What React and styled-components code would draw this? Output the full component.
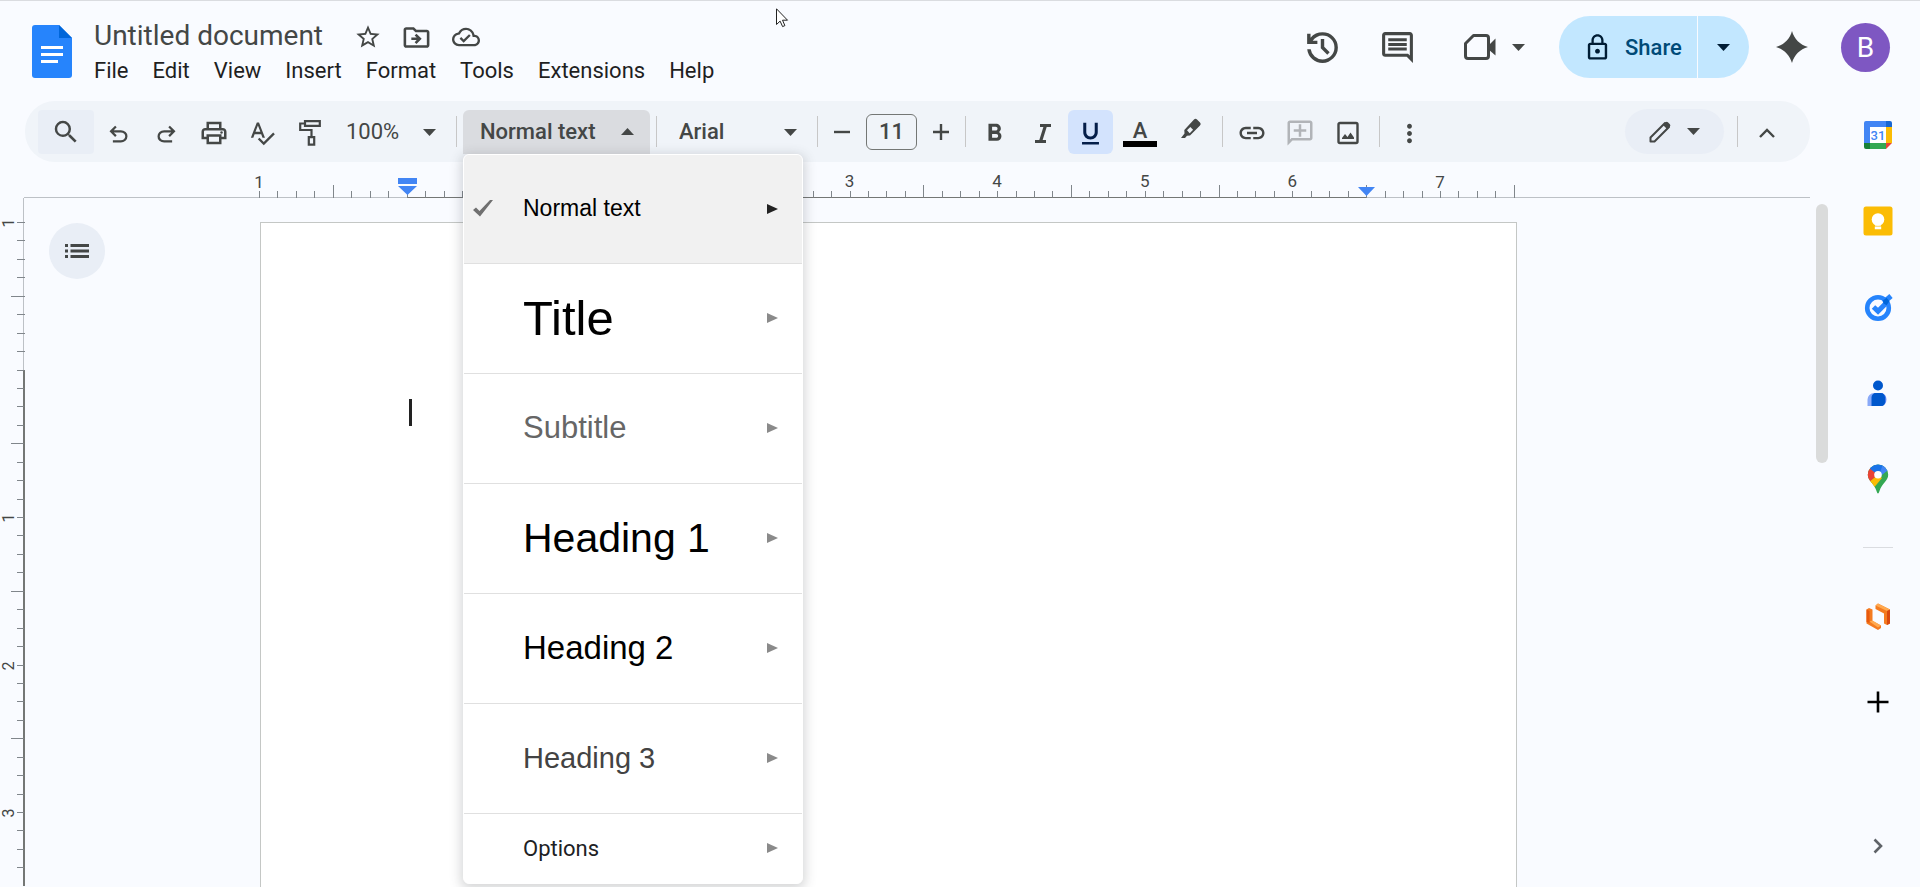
import { useState } from "react";
import styled, { createGlobalStyle } from "styled-components";
import {
  MdFormatBold,
  MdFormatUnderlined,
  MdLink,
  MdLockOutline,
  MdMoreVert,
  MdOutlineAddComment,
  MdOutlineCloudDone,
  MdOutlineDriveFileMove,
  MdOutlineInsertComment,
  MdOutlinePrint,
  MdSearch,
  MdSpellcheck,
  MdStarBorder,
} from "react-icons/md";

const MENUS = [
  "File",
  "Edit",
  "View",
  "Insert",
  "Format",
  "Tools",
  "Extensions",
  "Help",
];

const STYLES = [
  { name: "Normal text", size: 23, color: "#000", active: true },
  { name: "Title", size: 49, color: "#000" },
  { name: "Subtitle", size: 31, color: "#666" },
  { name: "Heading 1", size: 41, color: "#000" },
  { name: "Heading 2", size: 33, color: "#000" },
  { name: "Heading 3", size: 29, color: "#434343" },
];

// rulers are split in eighths of an inch, with a one inch page margin
const EIGHTHS_WIDE = 68;
const EIGHTHS_TALL = 36;

const inchLabel = (i) => {
  const inch = i / 8 - 1;
  return Number.isInteger(inch) && inch !== 0 ? Math.abs(inch) : null;
};

const App = () => {
  const [title, setTitle] = useState("Untitled document");
  const [fontSize, setFontSize] = useState("11");

  return (
    <>
      <GlobalStyle />
      <Page>
        <Header>
          <LogoLink href="#" aria-label="Docs home">
            <DocsLogo />
          </LogoLink>
          <TitleColumn>
            <TitleRow>
              <TitleInput
                aria-label="Document title"
                value={title}
                onChange={(e) => setTitle(e.target.value)}
              />
              <TitleIcons>
                <IconButton $width={49} aria-label="Star">
                  <MdStarBorder size={28} />
                </IconButton>
                <IconButton $width={49} aria-label="Move">
                  <MdOutlineDriveFileMove size={31} />
                </IconButton>
                <IconButton $width={49} aria-label="Document status">
                  <MdOutlineCloudDone size={28} />
                </IconButton>
              </TitleIcons>
            </TitleRow>
            <MenuBar>
              {MENUS.map((menu) => (
                <MenuButton key={menu}>{menu}</MenuButton>
              ))}
            </MenuBar>
          </TitleColumn>
          <HeaderActions>
            <IconButton $width={75} aria-label="Version history">
              <HistoryIcon />
            </IconButton>
            <IconButton $width={75} aria-label="Comments">
              <MdOutlineInsertComment size={37} />
            </IconButton>
            <MeetButton aria-label="Join a call">
              <MeetIcon />
              <Caret />
            </MeetButton>
            <ShareGroup>
              <ShareButton>
                <MdLockOutline size={29} color="#001d35" />
                Share
              </ShareButton>
              <ShareMore aria-label="Share options">
                <Caret />
              </ShareMore>
            </ShareGroup>
            <IconButton $width={86} aria-label="Ask Gemini">
              <SparkIcon />
            </IconButton>
            <Avatar aria-label="Account">B</Avatar>
          </HeaderActions>
        </Header>

        <Body>
          <Main>
            <Toolbar>
              <SearchButton aria-label="Search the menus">
                <MdSearch size={30} />
              </SearchButton>
              <ToolButton $width={48} aria-label="Undo">
                <UndoIcon />
              </ToolButton>
              <ToolButton $width={48} aria-label="Redo">
                <RedoIcon />
              </ToolButton>
              <ToolButton $width={48} aria-label="Print">
                <MdOutlinePrint size={30} />
              </ToolButton>
              <ToolButton $width={48} aria-label="Spelling">
                <MdSpellcheck size={28} />
              </ToolButton>
              <ToolButton $width={48} aria-label="Paint format">
                <RollerIcon />
              </ToolButton>
              <SelectBox $width={116}>
                <ToolSelect aria-label="Zoom" $pad={12} defaultValue="100%">
                  <option>100%</option>
                </ToolSelect>
                <SelectCaret>
                  <Caret />
                </SelectCaret>
              </SelectBox>
              <Separator />
              <StylePicker>
                <StyleButton aria-haspopup="menu" aria-expanded="true">
                  Normal text
                  <Caret up />
                </StyleButton>
                <StyleMenu role="menu">
                  {STYLES.map((item) => (
                    <StyleItem
                      key={item.name}
                      role="menuitem"
                      $active={item.active}
                    >
                      <CheckSlot>{item.active && <CheckIcon />}</CheckSlot>
                      <StyleName $size={item.size} $color={item.color}>
                        {item.name}
                      </StyleName>
                      <ArrowIcon />
                    </StyleItem>
                  ))}
                  <OptionsItem role="menuitem">
                    <CheckSlot />
                    <OptionsName>Options</OptionsName>
                    <ArrowIcon />
                  </OptionsItem>
                </StyleMenu>
              </StylePicker>
              <Separator />
              <SelectBox $width={148}>
                <ToolSelect
                  aria-label="Font"
                  $pad={16}
                  $medium
                  defaultValue="Arial"
                >
                  <option>Arial</option>
                </ToolSelect>
                <SelectCaret>
                  <Caret />
                </SelectCaret>
              </SelectBox>
              <Separator />
              <SizeButton aria-label="Decrease font size">
                <MinusIcon />
              </SizeButton>
              <SizeInput
                aria-label="Font size"
                value={fontSize}
                onChange={(e) => setFontSize(e.target.value)}
              />
              <SizeButton aria-label="Increase font size">
                <PlusIcon />
              </SizeButton>
              <Separator />
              <ToolGroup>
                <ToolButton aria-label="Bold">
                  <MdFormatBold size={29} />
                </ToolButton>
                <ToolButton aria-label="Italic">
                  <ItalicIcon />
                </ToolButton>
                <ToolButton $pressed aria-label="Underline" aria-pressed="true">
                  <MdFormatUnderlined size={29} />
                </ToolButton>
                <ColorButton aria-label="Text color">
                  A
                  <ColorBar />
                </ColorButton>
                <ToolButton $width={48} aria-label="Highlight color">
                  <HighlighterIcon />
                </ToolButton>
              </ToolGroup>
              <Separator $before={7} />
              <ToolGroup>
                <ToolButton aria-label="Insert link">
                  <MdLink size={30} />
                </ToolButton>
                <AddCommentButton aria-label="Add comment" disabled>
                  <MdOutlineAddComment size={30} />
                </AddCommentButton>
                <ToolButton aria-label="Insert image">
                  <PictureIcon />
                </ToolButton>
              </ToolGroup>
              <Separator $before={9} $after={7} />
              <ToolButton aria-label="More">
                <MdMoreVert size={29} />
              </ToolButton>
              <Spacer />
              <ModeButton aria-label="Editing mode">
                <PencilIcon />
                <Caret />
              </ModeButton>
              <Separator $before={13} />
              <ToolButton aria-label="Hide the menus">
                <ChevronUpIcon />
              </ToolButton>
            </Toolbar>

            <Ruler>
              <RulerTrack>
                {Array.from({ length: EIGHTHS_WIDE }, (_, i) => (
                  <Tick
                    key={i}
                    $half={i % 8 === 4}
                    $inside={i >= 8 && i < EIGHTHS_WIDE - 8}
                  >
                    {inchLabel(i) && <TickLabel>{inchLabel(i)}</TickLabel>}
                    {i === 8 && (
                      <Marker>
                        <svg width="19" height="18" viewBox="0 0 19 18">
                          <path d="M0 0h19v6H0zM0 8h19l-9.500 9z" />
                        </svg>
                      </Marker>
                    )}
                    {i === EIGHTHS_WIDE - 8 && (
                      <Marker>
                        <svg width="19" height="18" viewBox="0 0 19 18">
                          <path d="M1 8h17l-8.500 9z" />
                        </svg>
                      </Marker>
                    )}
                  </Tick>
                ))}
                <LastTick />
              </RulerTrack>
            </Ruler>

            <Workspace>
              <SideRuler>
                <SideLead />
                <SideTrack>
                  {Array.from({ length: EIGHTHS_TALL }, (_, i) => (
                    <SideTick key={i} $half={i % 8 === 4} $inside={i >= 8}>
                      {inchLabel(i) && (
                        <SideLabel $inside={i >= 8}>{inchLabel(i)}</SideLabel>
                      )}
                    </SideTick>
                  ))}
                </SideTrack>
              </SideRuler>
              <OutlineButton aria-label="Show outline">
                <ListIcon />
              </OutlineButton>
              <Canvas>
                <Sheet>
                  <TextCursor />
                </Sheet>
              </Canvas>
              <ScrollTrack>
                <ScrollThumb />
              </ScrollTrack>
            </Workspace>
          </Main>

          <SidePanel>
            <SideGroup>
              <SideButton aria-label="Calendar">
                <CalendarIcon />
              </SideButton>
              <SideButton aria-label="Keep">
                <KeepIcon />
              </SideButton>
              <SideButton aria-label="Tasks">
                <TasksIcon />
              </SideButton>
              <SideButton aria-label="Contacts">
                <ContactsIcon />
              </SideButton>
              <SideButton aria-label="Maps">
                <MapsIcon />
              </SideButton>
            </SideGroup>
            <SideDivider />
            <SideGroup>
              <SideButton aria-label="Add-on">
                <AddOnIcon />
              </SideButton>
              <SideButton aria-label="Get add-ons">
                <svg width="30" height="30" viewBox="0 0 30 30">
                  <path d="M15 4.500v21M4.500 15h21" stroke="#000" strokeWidth="2.600" />
                </svg>
              </SideButton>
            </SideGroup>
            <HidePanel aria-label="Hide side panel">
              <svg width="30" height="30" viewBox="0 0 30 30" fill="none">
                <path d="M11.500 8.500 18 15l-6.500 6.500" stroke="#5f6368" strokeWidth="2.600" />
              </svg>
            </HidePanel>
          </SidePanel>
        </Body>

        <Pointer>
          <svg width="13" height="20" viewBox="0 0 13 20">
            <path
              d="M.5.8v15.700l3.600-3.400 2.500 5.500 2.300-1-2.400-5.400h5z"
              fill="#fff"
              stroke="#222"
            />
          </svg>
        </Pointer>
      </Page>
    </>
  );
};

export default App;

const Caret = ({ up }) => (
  <svg width="13" height="7" viewBox="0 0 13 7" fill="currentColor">
    <path d={up ? "M0 7 6.500 0 13 7z" : "M0 0h13L6.500 7z"} />
  </svg>
);

const DocsLogo = () => (
  <svg width="40" height="53" viewBox="0 0 40 53">
    <path d="M3 0h24l13 13v37a3 3 0 0 1-3 3H3a3 3 0 0 1-3-3V3a3 3 0 0 1 3-3z" fill="#2684fc" />
    <path d="M27 0v13h13z" fill="#0066da" />
    <path d="M9 21h22v3H9zM9 28h22v3H9zM9 35h17v3H9z" fill="#fff" />
  </svg>
);

const HistoryIcon = () => (
  <svg width="41" height="41" viewBox="0 -960 960 960" fill="currentColor">
    <path d="M480-120q-138 0-240.500-91.500T122-440h82q14 104 92.500 172T480-200q117 0 198.500-81.500T760-480q0-117-81.500-198.500T480-760q-69 0-129 32t-101 88h110v80H120v-240h80v94q51-64 124.500-99T480-840q75 0 140.500 28.500t114 77q48.500 48.500 77 114T840-480q0 75-28.500 140.500t-77 114q-48.500 48.500-114 77T480-120Zm112-192L440-464v-216h80v184l128 128-56 56Z" />
  </svg>
);

const MeetIcon = () => (
  <svg width="32" height="26" viewBox="0 0 32 26">
    <path
      d="M9.500 1.500H22a2.500 2.500 0 0 1 2.500 2.500v18A2.500 2.500 0 0 1 22 24.500H4A2.500 2.500 0 0 1 1.500 22V9.500z"
      fill="none"
      stroke="currentColor"
      strokeWidth="3"
      strokeLinejoin="round"
    />
    <path d="M24 12l7.500-7.500v17L24 15z" fill="currentColor" />
  </svg>
);

const SparkIcon = () => (
  <svg width="32" height="32" viewBox="0 0 32 32" fill="currentColor">
    <path d="M16 0c2.200 8 8 13.800 16 16-8 2.200-13.800 8-16 16-2.200-8-8-13.800-16-16 8-2.200 13.800-8 16-16z" />
  </svg>
);

const UndoIcon = () => (
  <svg width="27" height="27" viewBox="0 -1000 960 960" fill="currentColor">
    <path d="M280-200v-80h284q63 0 109.500-40T720-420q0-60-46.500-100T564-560H312l104 104-56 56-200-200 200-200 56 56-104 104h252q97 0 169.500 63T800-420q0 94-72.500 157T564-200H280Z" />
  </svg>
);

const RedoIcon = () => (
  <svg width="27" height="27" viewBox="0 -1000 960 960" fill="currentColor">
    <path d="M396-200q-97 0-169.500-63T160-420q0-94 66.500-157T396-640h252L544-744l56-56 200 200-200 200-56-56 104-104H396q-63 0-109.500 40T240-420q0 60 46.500 100T396-280h284v80H396Z" />
  </svg>
);

const RollerIcon = () => (
  <svg width="24" height="28" viewBox="0 0 24 28" fill="none" stroke="currentColor" strokeWidth="2.200">
    <path d="M7 2.200h14.800v4.600H7zM7 4.500H2.200v6.500h11.300v7" />
    <path d="M10.800 18.200h5.400v7.500h-5.400z" />
  </svg>
);

const MinusIcon = () => (
  <svg width="16" height="16" viewBox="0 0 16 16">
    <path d="M0 8h16" stroke="currentColor" strokeWidth="2.400" />
  </svg>
);

const PlusIcon = () => (
  <svg width="16" height="16" viewBox="0 0 16 16">
    <path d="M0 8h16M8 0v16" stroke="currentColor" strokeWidth="2.400" />
  </svg>
);

const ItalicIcon = () => (
  <svg width="16" height="19" viewBox="0 0 16 19" fill="none" stroke="currentColor">
    <path d="M5 1.500h11M0 17.500h11" strokeWidth="2.800" />
    <path d="M10.500 1.500l-5 16" strokeWidth="3.200" />
  </svg>
);

const HighlighterIcon = () => (
  <svg width="22" height="30" viewBox="0 0 22 30">
    <path d="M1 20l3.500-4.500-.2-3.500L14 1.500q1.500-1.500 3 0l3 3q1.500 1.500 0 3L10 17.500l-3 .2L5 20z" fill="currentColor" />
    <path d="M7 12.300l3.300-3.400 2.800 2.800-3.400 3.500z" fill="#f0f4f9" />
  </svg>
);

const PictureIcon = () => (
  <svg width="22" height="24" viewBox="0 0 22 24">
    <rect x="1.500" y="2" width="19" height="20" rx="1.500" fill="none" stroke="currentColor" strokeWidth="2.400" />
    <path d="M5 18v-1l3-4 2.500 3 3-4.500 3.500 5V18z" fill="currentColor" />
  </svg>
);

const PencilIcon = () => (
  <svg width="22" height="22" viewBox="0 0 22 22">
    <path d="M1.500 20.500v-4L16 2l4 4L5.500 20.500z" fill="none" stroke="currentColor" strokeWidth="2" strokeLinejoin="round" />
    <path d="M14 4l2.500-2.800q1.200-1 2.400 0l2 2q1 1.200 0 2.400L18 8z" fill="currentColor" />
  </svg>
);

const ChevronUpIcon = () => (
  <svg width="16" height="10" viewBox="0 0 16 10" fill="none">
    <path d="M1 9l7-7 7 7" stroke="currentColor" strokeWidth="2.400" />
  </svg>
);

const CheckIcon = () => (
  <svg width="20" height="17" viewBox="0 0 20 17">
    <path d="M0 10l3-2.500L6.500 11 17 0h3L7 16.500z" fill="#707070" />
  </svg>
);

const ArrowIcon = () => (
  <svg width="11" height="10" viewBox="0 0 11 10" fill="currentColor">
    <path d="M0 0l11 5-11 5z" />
  </svg>
);

const ListIcon = () => (
  <svg width="24" height="14" viewBox="0 0 24 14" fill="#444746">
    <path d="M0 0h3v3H0zM0 5.500h3v3H0zM0 11h3v3H0zM5.500 0H24v3H5.500zM5.500 5.500H24v3H5.500zM5.500 11H24v3H5.500z" />
  </svg>
);

const CalendarIcon = () => (
  <svg width="30" height="30" viewBox="0 0 30 30">
    <path d="M3 1h20v6H7v16H1V3a2 2 0 0 1 2-2z" fill="#4285f4" />
    <path d="M23 1h4a2 2 0 0 1 2 2v4h-6z" fill="#1967d2" />
    <path d="M23 7h6v16h-6z" fill="#fbbc04" />
    <path d="M7 23h16v6H7z" fill="#34a853" />
    <path d="M1 23h6v6H3a2 2 0 0 1-2-2z" fill="#188038" />
    <path d="M23 23h6l-6 6z" fill="#ea4335" />
    <path d="M7 7h16v16H7z" fill="#fff" />
    <text x="15" y="20" textAnchor="middle" fontSize="13" fontWeight="500" fontFamily="Roboto, sans-serif" fill="#4285f4">
      31
    </text>
  </svg>
);

const KeepIcon = () => (
  <svg width="30" height="30" viewBox="0 0 30 30">
    <rect x="0.500" y="0.500" width="29" height="29" rx="2.500" fill="#fbbc04" />
    <circle cx="15" cy="13.500" r="6.300" fill="#fff" />
    <path d="M12 18h6v1.500h-6zM11.800 20.500h6.400v2.700h-6.400z" fill="#fff" />
  </svg>
);

const TasksIcon = () => (
  <svg width="30" height="30" viewBox="0 0 30 30" fill="none">
    <circle cx="15" cy="16" r="10.800" stroke="#2684fc" strokeWidth="4.600" />
    <path d="M10.500 15l4.500 4.200 8-8" stroke="#2684fc" strokeWidth="5" />
    <path d="M20.500 10.500l7.500-6.500" stroke="#2684fc" strokeWidth="5" />
    <path d="M20 8.500l3.500-2.800 3 3.600-3 4-3.200-2z" fill="#0066da" />
  </svg>
);

const ContactsIcon = () => (
  <svg width="30" height="30" viewBox="0 0 30 30">
    <circle cx="15" cy="7.500" r="5" fill="#0057cc" />
    <path d="M4.500 28v-6.500A6.500 6.500 0 0 1 11 15h9v13z" fill="#89a9f8" />
    <path d="M11 15h8a7 7 0 0 1 0 13h-8z" fill="#4f7cf0" />
    <path d="M8.500 28v-8.500A4.500 4.500 0 0 1 13 15h4.500a4.500 4.500 0 0 1 4.500 4.500V24a4 4 0 0 1-4 4z" fill="#0057cc" />
  </svg>
);

const MapsIcon = () => (
  <svg width="30" height="30" viewBox="0 0 30 30">
    <defs>
      <clipPath id="pin">
        <path d="M15 .5A10.200 10.200 0 0 0 4.800 10.700c0 6.300 6.200 8 8.700 16.300.5 1.500.8 2.500 1.500 2.500s1-1 1.500-2.500c2.500-8.300 8.700-10 8.700-16.300A10.200 10.200 0 0 0 15 .5z" />
      </clipPath>
    </defs>
    <g clipPath="url(#pin)">
      <path d="M0 0h30v30H0z" fill="#34a853" />
      <path d="M3 20L15 10.500l4 3.500L9 26z" fill="#fbbc04" />
      <path d="M0 0l7 3.500 8 7L5 19H0z" fill="#ea4335" />
      <path d="M6 4L12 0h12L15 11z" fill="#1a73e8" />
      <path d="M20 0h10v7l-6 0-9 7z" fill="#4285f4" />
    </g>
    <circle cx="15" cy="10.800" r="3.800" fill="#fff" />
  </svg>
);

const AddOnIcon = () => (
  <svg width="30" height="30" viewBox="0 0 30 30">
    <path d="M12.500 4.500l2.500-2 12 6v14l-3 1.500-3-1.500v-10l-8.500-4.500z" fill="#f47b20" />
    <path d="M12.500 4.500l2.500-2 12 6-3 1.500z" fill="#ffa94f" />
    <path d="M24 10l3-1.500v14L24 24z" fill="#d9480f" />
    <path d="M3.500 8.500L6 7l3.500 1.500v11.500l8.500 4.500v2.500l-3 2L3.500 22.500z" fill="#f47b20" />
    <path d="M6.500 20.500l3-1 8.500 5-3 2z" fill="#ffa94f" />
    <path d="M3.500 8.500l3 1.500v12l-3-1z" fill="#e8590c" />
  </svg>
);

const GlobalStyle = createGlobalStyle`
  * {
    box-sizing: border-box;
  }

  body {
    margin: 0;
    background: #f9fbff;
    color: #444746;
    font-family: Roboto, "Liberation Sans", sans-serif;
  }

  button,
  input,
  select {
    margin: 0;
    padding: 0;
    border: none;
    outline: none;
    background: transparent;
    color: inherit;
    font-family: inherit;
  }

  svg {
    display: block;
    flex-shrink: 0;
  }
`;

const Page = styled.div`
  display: flex;
  flex-direction: column;
  height: 100vh;
  overflow: hidden;
  border-top: 1px solid #dadce0;
`;

const Header = styled.header`
  display: flex;
  align-items: flex-start;
  padding: 15px 30px 0 32px;
  height: 100px;
  flex-shrink: 0;
`;

const LogoLink = styled.a`
  padding-top: 9px;
`;

const TitleColumn = styled.div`
  display: flex;
  flex-direction: column;
  gap: 3px;
  margin-left: 22px;
  padding-top: 1px;
`;

const TitleRow = styled.div`
  display: flex;
  align-items: center;
  height: 38px;
`;

const TitleInput = styled.input`
  width: 249px;
  height: 34px;
  font-size: 28px;
  line-height: 34px;
`;

const TitleIcons = styled.div`
  display: flex;
  padding-top: 2px;
`;

const IconButton = styled.button`
  display: flex;
  align-items: center;
  justify-content: center;
  width: ${({ $width }) => $width}px;
`;

const MenuBar = styled.nav`
  display: flex;
  gap: 24px;
`;

const MenuButton = styled.button`
  color: #1f1f1f;
  font-size: 22px;
  line-height: 26px;
`;

const HeaderActions = styled.div`
  display: flex;
  align-items: center;
  height: 62px;
  margin-left: auto;
`;

const MeetButton = styled.button`
  display: flex;
  align-items: center;
  justify-content: center;
  gap: 16px;
  width: 118px;
`;

const ShareGroup = styled.div`
  display: flex;
  gap: 1px;
  height: 62px;
  margin-left: 6px;
  border-radius: 31px;
  overflow: hidden;
  color: #001d35;
`;

const ShareButton = styled.button`
  display: flex;
  align-items: center;
  gap: 13px;
  width: 138px;
  padding-left: 24px;
  background: #c2e7ff;
  color: #004a77;
  font-size: 22px;
  font-weight: 500;
`;

const ShareMore = styled.button`
  display: flex;
  align-items: center;
  width: 51px;
  padding-left: 19px;
  background: #c2e7ff;
`;

const Avatar = styled.button`
  width: 49px;
  height: 49px;
  margin-left: 6px;
  border-radius: 50%;
  background: #7e57c2;
  color: #fff;
  font-size: 28px;
`;

const Body = styled.div`
  display: flex;
  flex: 1;
  min-height: 0;
`;

const Main = styled.main`
  display: flex;
  flex-direction: column;
  flex: 1;
  min-width: 0;
`;

const Toolbar = styled.div`
  display: flex;
  align-items: center;
  flex-shrink: 0;
  height: 61px;
  margin: 0 26px 0 25px;
  padding: 0 21px 0 13px;
  border-radius: 30px;
  background: #f0f4f9;
`;

const ToolButton = styled(IconButton)`
  width: ${({ $width }) => $width || 45}px;
  height: 44px;
  padding-top: 3px;
  border-radius: 6px;
  background: ${({ $pressed }) => ($pressed ? "#d3e3fd" : "transparent")};
  color: ${({ $pressed }) => ($pressed ? "#041e49" : "inherit")};
`;

const SearchButton = styled(IconButton)`
  width: 56px;
  height: 44px;
  border-radius: 4px;
  background: #e9eef6;
`;

const AddCommentButton = styled(ToolButton)`
  color: #b1b4b8;

  svg {
    transform: scaleX(-1);
  }
`;

const ToolGroup = styled.div`
  display: flex;
  gap: 3px;
`;

const Spacer = styled.div`
  flex: 1;
`;

const Separator = styled.div`
  flex-shrink: 0;
  width: 1px;
  height: 31px;
  margin: 0 ${({ $after = 6 }) => $after}px 0
    ${({ $before = 6 }) => $before}px;
  background: #c7c7c7;
`;

const SelectBox = styled.div`
  position: relative;
  width: ${({ $width }) => $width}px;
`;

const ToolSelect = styled.select`
  appearance: none;
  width: 100%;
  height: 44px;
  padding-left: ${({ $pad }) => $pad}px;
  font-size: 22px;
  font-weight: ${({ $medium }) => ($medium ? 500 : 400)};
`;

const SelectCaret = styled.span`
  position: absolute;
  top: 19px;
  right: 14px;
  pointer-events: none;
`;

const StylePicker = styled.div`
  position: relative;
`;

const StyleButton = styled.button`
  display: flex;
  align-items: center;
  justify-content: space-between;
  width: 187px;
  height: 44px;
  padding: 0 16px 0 17px;
  border-radius: 6px 6px 0 0;
  background: #dadce0;
  font-size: 22px;
  font-weight: 500;
`;

const StyleMenu = styled.div`
  position: absolute;
  z-index: 2;
  top: 100%;
  left: 0;
  width: 340px;
  overflow: hidden;
  border: 1px solid #fff;
  border-radius: 6px;
  background: #fff;
  box-shadow: 0 3px 12px 2px rgba(60, 64, 67, 0.22);
`;

const StyleItem = styled.button`
  display: flex;
  align-items: center;
  width: 100%;
  height: ${({ $active }) => ($active ? 109 : 110)}px;
  padding: 0 24px 0 9px;
  border-bottom: 1px solid #e0e0e0;
  background: ${({ $active }) => ($active ? "#f1f1f1" : "#fff")};
  color: ${({ $active }) => ($active ? "#222" : "#8a8a8a")};
`;

const CheckSlot = styled.span`
  width: 50px;
`;

const StyleName = styled.span`
  flex: 1;
  color: ${({ $color }) => $color};
  font-family: "Liberation Sans", Arial, sans-serif;
  font-size: ${({ $size }) => $size}px;
  text-align: left;
`;

const OptionsItem = styled(StyleItem)`
  height: 69px;
  border-bottom: none;
`;

const OptionsName = styled.span`
  flex: 1;
  color: #202124;
  font-size: 22px;
  text-align: left;
`;

const SizeButton = styled(IconButton)`
  width: 36px;
  height: 44px;
`;

const SizeInput = styled.input`
  width: 51px;
  height: 36px;
  margin: 0 6px;
  border: 1px solid #747775;
  border-radius: 6px;
  font-size: 22px;
  font-weight: 500;
  text-align: center;
`;

const ColorButton = styled.button`
  display: flex;
  flex-direction: column;
  align-items: center;
  width: 48px;
  height: 44px;
  padding-top: 11px;
  font-size: 22px;
  font-weight: 500;
  line-height: 20px;
`;

const ColorBar = styled.span`
  width: 34px;
  height: 6px;
  background: #000;
`;

const ModeButton = styled.button`
  display: flex;
  align-items: center;
  justify-content: center;
  gap: 16px;
  width: 99px;
  height: 45px;
  border-radius: 23px;
  background: #e9eef6;
`;

const Ruler = styled.div`
  display: flex;
  justify-content: center;
  align-items: flex-end;
  flex-shrink: 0;
  height: 36px;
  margin: 0 26px 0 24px;
  padding-right: 60px;
  box-shadow: inset 0 -1px #bdc1c6;
`;

const RulerTrack = styled.div`
  display: flex;
  align-items: flex-end;
  width: 1256px;
`;

const Tick = styled.div`
  position: relative;
  flex: 1;
  height: ${({ $half }) => ($half ? 13 : 7)}px;
  border-left: 1px solid #80868b;
  border-bottom: ${({ $inside }) => ($inside ? "1px solid #747775" : "none")};
`;

const LastTick = styled.div`
  width: 1px;
  height: 13px;
  background: #80868b;
`;

const TickLabel = styled.span`
  position: absolute;
  bottom: 6px;
  left: -11px;
  width: 20px;
  font-size: 17px;
  line-height: 20px;
  text-align: center;
`;

const Marker = styled.span`
  position: absolute;
  bottom: 1px;
  left: -10px;

  svg {
    fill: #4285f4;
  }
`;

const Workspace = styled.div`
  position: relative;
  display: flex;
  flex: 1;
  min-height: 0;
  overflow: hidden;
`;

const SideRuler = styled.div`
  width: 25px;
  flex-shrink: 0;
`;

const SideLead = styled.div`
  height: 24px;
  margin-right: 1px;
  border-right: 1px solid #bdc1c6;
`;

const SideTrack = styled.div`
  display: flex;
  flex-direction: column;
  align-items: flex-end;
  height: 664px;
`;

const SideTick = styled.div`
  position: relative;
  flex: 1;
  width: ${({ $half }) => ($half ? 14 : 8)}px;
  border-top: 1px solid #80868b;
  border-right: ${({ $inside }) => ($inside ? "2px solid #747775" : "none")};

  &::after {
    content: "";
    position: absolute;
    top: 0;
    bottom: 0;
    right: ${({ $inside }) => ($inside ? -1 : 1)}px;
    width: 1px;
    background: ${({ $inside }) => ($inside ? "#747775" : "#bdc1c6")};
  }
`;

const SideLabel = styled.span`
  position: absolute;
  top: -8px;
  right: ${({ $inside }) => ($inside ? 6 : 8)}px;
  width: 16px;
  font-size: 16px;
  line-height: 16px;
  text-align: center;
  transform: rotate(-90deg);
`;

const OutlineButton = styled.button`
  position: absolute;
  z-index: 1;
  top: 25px;
  left: 49px;
  display: flex;
  align-items: center;
  justify-content: center;
  width: 56px;
  height: 56px;
  border-radius: 50%;
  background: #e9eef6;
`;

const Canvas = styled.div`
  display: flex;
  justify-content: center;
  flex: 1;
  padding: 24px 58px 0 0;
`;

const Sheet = styled.div`
  width: 1257px;
  height: 1623px;
  padding: 176px 148px;
  border: 1px solid #c4c7c5;
  background: #fff;
`;

const TextCursor = styled.div`
  width: 3px;
  height: 27px;
  background: #222;
`;

const ScrollTrack = styled.div`
  width: 26px;
  padding: 6px 8px 0 6px;
`;

const ScrollThumb = styled.div`
  height: 259px;
  border-radius: 6px;
  background: #dadbdb;
`;

const SidePanel = styled.aside`
  display: flex;
  flex-direction: column;
  align-items: center;
  flex-shrink: 0;
  width: 84px;
  padding: 19px 0 26px;
`;

const SideGroup = styled.div`
  display: flex;
  flex-direction: column;
  gap: 56px;
`;

const SideButton = styled.button`
  width: 30px;
  height: 30px;
`;

const SideDivider = styled.div`
  width: 30px;
  height: 1px;
  margin: 53px 0;
  background: #dadce0;
`;

const HidePanel = styled(SideButton)`
  margin-top: auto;
`;

const Pointer = styled.div`
  position: absolute;
  top: 8px;
  left: 776px;
  pointer-events: none;
`;
